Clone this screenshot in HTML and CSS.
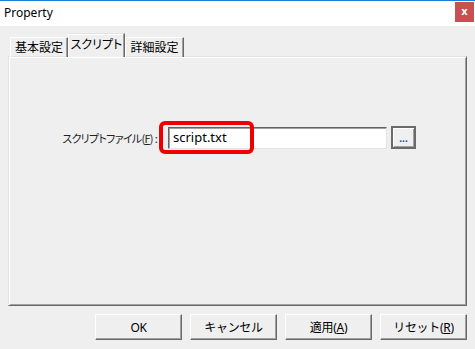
FILE: index.html
```html
<!DOCTYPE html>
<html lang="ja">

<head>
    <meta charset="UTF-8">
    <title>Property</title>
    <link rel="stylesheet" href="styles.css">
</head>

<body>
    <div class="window">
        <header class="titlebar">
            <span class="title">Property</span>
            <button class="luk">x</button>
        </header>

        <section class="tabs">
            <div class="tab">基本設定</div>
            <div class="tab valgt">スクリプト</div>
            <div class="tab">詳細設定</div>
        </section>

        <section class="panel">
            <div class="row">
                <label class="label"><span>スクリプトファイル(<u>F</u>) :</span></label>
                <div class="field">
                    <input class="input" type="text" value="script.txt">
                    <span class="mark"></span>
                </div>
                <button class="browse">...</button>
            </div>
        </section>

        <footer class="knapper">
            <button class="knap">OK</button>
            <button class="knap">キャンセル</button>
            <button class="knap">適用(<u>A</u>)</button>
            <button class="knap">リセット(<u>R</u>)</button>
        </footer>
    </div>
</body>

</html>
```

FILE: styles.css
```css
* {
    margin: 0;
    box-sizing: border-box;
}

body {
    font-family: "Noto Sans", "Noto Sans CJK JP", sans-serif;
    font-size: 12px;
    color: #000;
    background: #efefef;
    font-feature-settings: "palt";
}

.window {
    width: 475px;
    height: 349px;
    background: #efefef;
    display: flex;
    flex-direction: column;
}

.titlebar {
    height: 26px;
    background: #fff;
    border-top: 1px solid #1b7fd6;
    display: flex;
    align-items: flex-start;
}

.title {
    padding-left: 4px;
    line-height: 24px;
    font-size: 12px;
}

.luk {
    margin-left: auto;
    margin-top: 1px;
    margin-right: 1px;
    width: 19px;
    height: 20px;
    border: none;
    background: #c75050;
    color: #fff;
    font-family: "DejaVu Sans", sans-serif;
    font-weight: bold;
    font-size: 10px;
    line-height: 18px;
    padding: 0;
}

.tabs {
    display: flex;
    align-items: flex-end;
    height: 31px;
    padding-left: 10px;
    margin-bottom: -1px;
    position: relative;
    z-index: 1;
}

.tab {
    height: 20px;
    line-height: 17px;
    border-top: 1px solid #fff;
    border-left: 1px solid #fff;
    border-right: 1px solid #696969;
    box-shadow: inset -1px 0 #a0a0a0;
    text-align: center;
    font-family: "Noto Sans CJK JP", sans-serif;
    font-size: 12px;
    white-space: nowrap;
}

.tab:nth-child(1) {
    width: 58px;
}

.tab:nth-child(2) {
    width: 57px;
}

.tab:nth-child(3) {
    width: 59px;
}

.valgt {
    height: 24px;
    line-height: 19px;
    background: #efefef;
    border-top: 1px solid #e3e3e3;
    box-shadow: inset -1px 0 #a0a0a0, inset 0 1px #fff;
}

.panel {
    margin-left: 8px;
    width: 459px;
    height: 250px;
    border-top: 1px solid #e3e3e3;
    border-left: 1px solid #e3e3e3;
    border-right: 1px solid #696969;
    border-bottom: 1px solid #696969;
    box-shadow: inset 1px 1px #fff, inset -1px -1px #a0a0a0;
    padding: 69px 0 0 51px;
}

.row {
    display: flex;
    align-items: center;
}

.label {
    width: 97px;
    display: flex;
    justify-content: flex-end;
    font-family: "Noto Sans CJK JP", sans-serif;
    font-size: 11px;
    letter-spacing: -0.7px;
    white-space: nowrap;
    color: #222;
}

.field {
    position: relative;
    margin-left: 11px;
}

.input {
    display: block;
    width: 219px;
    height: 22px;
    border-top: 1px solid #646464;
    border-left: 1px solid #646464;
    border-right: 1px solid #e3e3e3;
    border-bottom: 1px solid #e3e3e3;
    box-shadow: inset 1px 1px #a0a0a0;
    background: #fff;
    font-family: "Noto Sans", sans-serif;
    font-size: 13px;
    padding: 0 0 1px 4px;
    color: #000;
    outline: none;
}

.mark {
    position: absolute;
    left: -9px;
    top: -6px;
    width: 95px;
    height: 33px;
    border: 4px solid #ee0000;
    border-radius: 6px;
}

.browse {
    margin-left: 4px;
    width: 25px;
    height: 23px;
    background: #efefef;
    border: 2px solid #6a6a6a;
    box-shadow: inset 1px 1px #fff, inset -1px -1px #a0a0a0;
    font-family: "Noto Sans", sans-serif;
    font-weight: bold;
    font-size: 10px;
    color: #1b4f9a;
    padding: 0;
}

.knapper {
    display: flex;
    justify-content: flex-end;
    gap: 8px;
    padding: 8px 8px 0 0;
}

.knap {
    width: 87px;
    height: 26px;
    background: #efefef;
    border-top: 1px solid #fff;
    border-left: 1px solid #fff;
    border-right: 1px solid #696969;
    border-bottom: 1px solid #696969;
    box-shadow: inset -1px -1px #a0a0a0;
    font-family: "Noto Sans", "Noto Sans CJK JP", sans-serif;
    font-size: 12px;
    color: #000;
    padding: 0;
    letter-spacing: -0.3px;
}
```
